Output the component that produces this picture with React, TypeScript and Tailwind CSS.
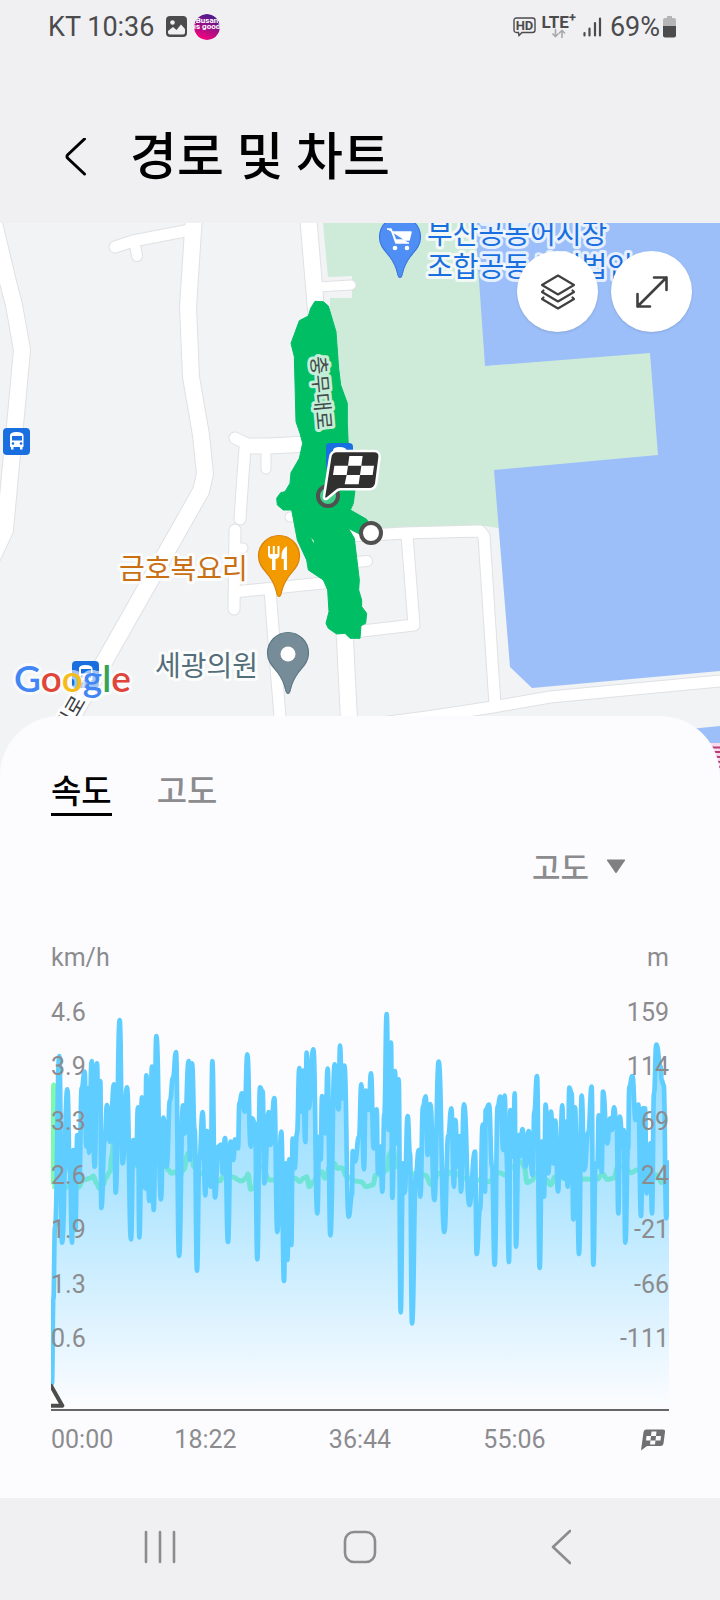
import { useState } from 'react'
import { clsx } from 'clsx'

// chart units: 1854 wide, 1233 high, y grows downwards
const SPEED: number[][] = [
  [3, 1150], [7, 900], [12, 680], [25, 168], [33, 728], [49, 268], [57, 520], [63, 728], [67, 450], [73, 690],
  [79, 405], [85, 540], [92, 265], [101, 215], [106, 440], [111, 265], [114, 458], [122, 183], [131, 500], [138, 190],
  [142, 330], [148, 243], [151, 624], [161, 420], [168, 315], [177, 425], [189, 253], [194, 578], [206, 60], [215, 490],
  [228, 262], [240, 718], [247, 420], [255, 490], [261, 322], [265, 712], [273, 292], [282, 565], [286, 226], [295, 603],
  [303, 200], [308, 630], [316, 108], [330, 598], [337, 353], [347, 500], [357, 300], [366, 232], [375, 156], [384, 768],
  [396, 316], [401, 400], [413, 183], [417, 480], [423, 190], [431, 388], [438, 812], [445, 480], [455, 336], [463, 586],
  [468, 393], [479, 560], [484, 183], [492, 592], [502, 440], [510, 434], [515, 520], [522, 414], [531, 726], [539, 425],
  [547, 480], [552, 418], [561, 445], [565, 310], [573, 280], [581, 335], [589, 163], [599, 440], [603, 355], [612, 370],
  [619, 778], [627, 262], [635, 275], [640, 550], [653, 336], [658, 435], [670, 294], [679, 696], [691, 395], [699, 843],
  [704, 490], [709, 780], [715, 478], [721, 735], [725, 416], [731, 505], [738, 400], [745, 204], [750, 335], [756, 212],
  [763, 426], [767, 158], [773, 325], [787, 148], [799, 640], [805, 410], [809, 480], [813, 288], [823, 400], [830, 206],
  [838, 706], [851, 193], [863, 328], [867, 137], [873, 295], [880, 197], [893, 650], [903, 585], [905, 453], [912, 485],
  [924, 410], [931, 253], [939, 508], [944, 272], [953, 330], [960, 220], [968, 445], [977, 328], [981, 520], [988, 440],
  [994, 575], [1000, 340], [1007, 42], [1013, 390], [1020, 128], [1024, 594], [1032, 213], [1037, 430], [1043, 238],
  [1049, 937], [1056, 490], [1061, 578], [1070, 348], [1077, 460], [1083, 970], [1095, 520], [1103, 450], [1108, 590],
  [1116, 318], [1124, 289], [1130, 465], [1138, 312], [1150, 600], [1163, 185], [1180, 696], [1192, 405], [1201, 325],
  [1209, 560], [1213, 360], [1220, 500], [1225, 408], [1230, 575], [1239, 313], [1255, 615], [1272, 455], [1277, 762],
  [1287, 630], [1295, 374], [1302, 575], [1304, 330], [1314, 314], [1323, 500], [1331, 794], [1340, 320], [1348, 290],
  [1357, 450], [1361, 287], [1366, 460], [1374, 786], [1378, 330], [1387, 470], [1391, 280], [1395, 740], [1403, 405],
  [1407, 470], [1414, 387], [1424, 500], [1433, 393], [1445, 525], [1450, 335], [1458, 228], [1466, 804], [1473, 425],
  [1479, 590], [1484, 314], [1492, 520], [1500, 335], [1507, 490], [1513, 362], [1521, 574], [1527, 465], [1534, 316],
  [1538, 535], [1544, 365], [1550, 560], [1555, 263], [1562, 280], [1567, 658], [1572, 322], [1577, 440], [1584, 762],
  [1592, 287], [1600, 510], [1612, 395], [1622, 260], [1627, 794], [1634, 490], [1639, 500], [1643, 346], [1652, 515],
  [1656, 275], [1669, 430], [1677, 355], [1683, 390], [1689, 322], [1697, 380], [1702, 640], [1707, 350], [1714, 440],
  [1718, 390], [1723, 728], [1731, 450], [1735, 260], [1744, 228], [1754, 360], [1762, 314], [1770, 648], [1776, 325],
  [1782, 325], [1787, 580], [1792, 480], [1798, 430], [1803, 640], [1809, 280], [1816, 134], [1829, 200], [1832, 240],
  [1838, 255], [1846, 655], [1851, 488],
]

const ALTITUDE: number[][] = [
  [4, 560], [8, 255], [14, 560], [40, 560], [82, 562], [97, 540], [117, 535], [127, 528], [137, 550], [145, 565],
  [157, 555], [165, 532], [177, 515], [182, 470], [189, 420], [222, 410], [229, 435], [239, 490], [252, 498],
  [317, 450], [345, 500], [352, 510], [362, 520], [372, 515], [385, 530], [397, 510], [412, 460], [422, 455],
  [428, 500], [447, 520], [507, 542], [517, 530], [542, 530], [572, 543], [585, 535], [591, 522], [599, 568],
  [609, 562], [622, 500], [632, 500], [657, 540], [732, 535], [747, 545], [757, 535], [767, 530], [775, 560],
  [787, 545], [802, 520], [812, 515], [822, 535], [837, 500], [849, 490], [859, 505], [872, 503], [887, 530],
  [912, 543], [929, 545], [947, 560], [965, 555], [975, 525], [992, 522], [1007, 510], [1017, 460], [1025, 445],
  [1037, 500], [1077, 520], [1122, 525], [1142, 555], [1165, 520], [1187, 525], [1202, 515], [1242, 535],
  [1277, 540], [1317, 545], [1332, 520], [1347, 518], [1362, 525], [1387, 500], [1412, 485], [1419, 500],
  [1429, 548], [1442, 542], [1455, 520], [1487, 540], [1499, 555], [1512, 530], [1567, 540], [1597, 537],
  [1637, 538], [1655, 522], [1669, 538], [1687, 535], [1702, 500], [1717, 498], [1742, 518], [1757, 510],
  [1787, 520], [1817, 525], [1832, 548], [1851, 520],
]

const SPEED_TICKS = ['4.6', '3.9', '3.3', '2.6', '1.9', '1.3', '0.6']
const ALTITUDE_TICKS = ['159', '114', '69', '24', '-21', '-66', '-111']

const ROADS: { d: string; w: number }[] = [
  { d: 'M-6 223 L8 282 L14 305 L22 350 L16 415 L10 475 L5 530 L-16 575', w: 16 },
  { d: 'M194 215 L188 307 L191 377 L201 435 L205 474 L201 491 L104 662 L60 738', w: 16 },
  { d: 'M115 247 L133 241 L190 230', w: 11 },
  { d: 'M135 245 L137 256', w: 10 },
  { d: 'M308 215 L316 310 L325 420 L335 520 L345 640 L350 740', w: 16 },
  { d: 'M318 287 L351 285', w: 9 },
  { d: 'M235 438 L247 444 L268 446', w: 11 },
  { d: 'M252 446 L270 446 L308 444', w: 15 },
  { d: 'M245 448 L243 475 L240 519', w: 11 },
  { d: 'M266 453 L266 469', w: 9 },
  { d: 'M235 530 L234 609', w: 11 },
  { d: 'M236 548 L243 548', w: 9 },
  { d: 'M234 592 L323 583', w: 11 },
  { d: 'M270 590 L281 730', w: 11 },
  { d: 'M290 517 L310 515', w: 9 },
  { d: 'M340 536 L371 535 L405 533 L480 531 L484 536 L495 705', w: 11 },
  { d: 'M407 535 L414 625 L345 633', w: 11 },
  { d: 'M345 563 L367 561', w: 10 },
  { d: 'M350 727 L427 717 L493 707 L550 697 L730 680', w: 11 },
]

// each segment leaves and enters its points horizontally
function toCurve(points: number[][]) {
  let d = `M${points[0][0]} ${points[0][1]}`
  for (let i = 1; i < points.length; i++) {
    const [x0, y0] = points[i - 1]
    const [x1, y1] = points[i]
    const mid = (x0 + x1) / 2
    d += ` C${mid} ${y0} ${mid} ${y1} ${x1} ${y1}`
  }
  return d
}

function StatusBar() {
  return (
    <div className="flex h-[52px] items-center justify-between pt-px pr-11 pl-12 text-[27px] leading-8 text-[#4b4b4d]">
      <div className="flex items-center">
        <span>KT 10:36</span>
        <svg viewBox="0 0 21 21" className="ml-3 h-[21px] w-[21px]">
          <rect width="21" height="21" rx="4" fill="#4b4b4d" />
          <circle cx="6.5" cy="6.5" r="2.3" fill="#f0f0f3" />
          <path d="M2 15 L7 11 L10.5 14 L15 8.500 L19 13 V16.500 Q19 18.500 17 18.500 H4 Q2 18.500 2 16.500 Z" fill="#f0f0f3" />
        </svg>
        <svg viewBox="0 0 26 26" className="ml-[7px] h-[26px] w-[26px]">
          <defs>
            <linearGradient id="busan" x1="0.2" y1="1" x2="0.6" y2="0">
              <stop offset="0.1" stopColor="#f0047f" />
              <stop offset="0.9" stopColor="#571a8b" />
            </linearGradient>
            <clipPath id="badge"><circle cx="13" cy="13" r="13" /></clipPath>
          </defs>
          <g clipPath="url(#badge)">
            <circle cx="13" cy="13" r="13" fill="url(#busan)" />
            <g fill="#fff" fontSize="8" fontWeight="700" textAnchor="middle">
              <text x="13" y="9">Busan</text>
              <text x="13" y="15">is good</text>
            </g>
          </g>
        </svg>
      </div>
      <div className="flex items-center">
        <svg viewBox="0 0 23 20" className="h-5 w-[23px]">
          <path d="M3.500 1 H19.500 Q22 1 22 3.500 V13 Q22 15.500 19.500 15.500 H9 L6 18.500 L5.500 15.500 H3.500 Q1 15.500 1 13 V3.500 Q1 1 3.500 1 Z" fill="none" stroke="#4b4b4d" strokeWidth="1.4" />
          <text x="11.500" y="13" fontSize="13" fontWeight="700" textAnchor="middle" fill="#4b4b4d">HD</text>
        </svg>
        <div className="ml-[6px] flex flex-col items-center">
          <span className="text-[17px] leading-[14px] font-bold">LTE<sup>+</sup></span>
          <svg viewBox="0 0 14 9" className="h-[9px] w-[14px]" fill="none" stroke="#a9a9ab" strokeWidth="1.6">
            <path d="M3.500 0 V7.500 M0.500 4.500 L3.500 7.700 L6.500 4.500" />
            <path d="M10 9 V1.500 M7 4.500 L10 1.300 L13 4.500" />
          </svg>
        </div>
        <svg viewBox="0 0 19 20" className="ml-[7px] h-5 w-[19px]" stroke="#4b4b4d" strokeWidth="2.2" strokeLinecap="round">
          <path d="M1.500 16 V18.500 M6.500 11.500 V18.500 M12 6 V18.500 M17 1.500 V18.500" />
        </svg>
        <span className="ml-2">69%</span>
        <svg viewBox="0 0 13 22" className="ml-[3px] h-[22px] w-[13px]">
          <path d="M4 0 H9 V2 H11 Q13 2 13 4 V11 H0 V4 Q0 2 2 2 H4 Z" fill="#b5b5b8" />
          <path d="M0 10 H13 V19.500 Q13 21.500 11 21.500 H2 Q0 21.500 0 19.500 Z" fill="#4b4b4d" />
        </svg>
      </div>
    </div>
  )
}

function BusStop({ x, y }: { x: number; y: number }) {
  return (
    <g transform={`translate(${x} ${y})`}>
      <rect width="27" height="27" rx="4" fill="#1a6fe0" />
      <path d="M7 7.500 Q7 4 13.500 4 Q20.500 4 20.500 7.500 V19 H19.500 V21.500 H17 V19 H10.500 V21.500 H8 V19 H7 Z" fill="#fff" />
      <rect x="9" y="8" width="10" height="4.500" fill="#1a6fe0" />
      <circle cx="10" cy="15.500" r="1.300" fill="#1a6fe0" />
      <circle cx="18" cy="15.500" r="1.300" fill="#1a6fe0" />
    </g>
  )
}

function Pin({ x, y, fill, stroke, children }: { x: number; y: number; fill: string; stroke: string; children: React.ReactNode }) {
  return (
    <g transform={`translate(${x} ${y})`}>
      <path
        d="M0 -20.500 A20.500 20.500 0 0 1 20.500 0 C20.500 9 15 13.500 10 20 C6 25.500 4 30 2.500 36 Q1.800 40.500 0 40.500 Q-1.800 40.500 -2.500 36 C-4 30 -6 25.500 -10 20 C-15 13.500 -20.500 9 -20.500 0 A20.500 20.500 0 0 1 0 -20.500 Z"
        fill={fill}
        stroke={stroke}
        strokeWidth="1.200"
      />
      {children}
    </g>
  )
}

function RouteMap() {
  return (
    <svg viewBox="0 223 720 560" preserveAspectRatio="xMidYMid slice" className="block h-[560px] w-full bg-[#f1f3f5]" role="img">
      <path d="M323 223 H480 L490 366 L655 345 L662 460 L498 470 L502 528 L498 528 L486 526 L400 531 L350 534 L330 400 L330 298 H352 V276 L328 277 Z" fill="#ceead8" />
      <path d="M475 223 H720 V671 L532 688 L510 667 L494 470 L658 455 L650 353 L485 366 Z" fill="#9cbff9" />
      <path d="M690 729 L720 726 V744 H690 Z" fill="#9cbff9" />
      <rect x="690" y="743" width="30" height="40" fill="#f9dcec" />
      <path d="M700 747.500 H720 M700 752 H720 M708 756.500 L720 757 M710 761 L720 762 M714 767 H720" stroke="#b93d77" strokeWidth="2" />

      <g fill="none" strokeLinecap="round" strokeLinejoin="round">
        {ROADS.map(r => <path key={r.d} d={r.d} stroke="#dfe1e4" strokeWidth={r.w + 2} />)}
        {ROADS.map(r => <path key={r.d} d={r.d} stroke="#fff" strokeWidth={r.w} />)}
      </g>

      <BusStop x={3} y={428} />

      {/* walked route */}
      <g transform="translate(260 290) scale(0.33333)">
        <path
          d="M165 34 L190 35 L205 48 L228 125 L236 235 L242 285 L262 340 L262 400 L265 470 L275 560 L285 600 L280 640 L271 660 L320 688 L340 725 L300 733 L265 715 L283 745 L298 870 L296 900 L305 930 L305 950 L320 970 L317 1000 L303 1007 L300 1045 L270 1045 L255 1030 L230 1032 L205 1015 L198 1000 L207 965 L203 900 L190 870 L145 840 L140 810 L112 750 L95 660 L70 660 L52 645 L50 625 L62 608 L75 605 L90 580 L93 548 L118 505 L128 460 L120 430 L108 395 L103 200 L93 160 L118 92 L145 78 L152 55 Z"
          fill="#00be64"
          stroke="#00be64"
          strokeWidth="3"
          strokeLinejoin="round"
        />
        <path d="M153 743 L162 752 L161 760 Z" fill="#ceead8" />
      </g>
      <BusStop x={326} y={443} />

      <g transform="rotate(85 320 392)">
        <text x="321" y="398" fontSize="20" textAnchor="middle" fill="#414b49" stroke="#c5eed8" strokeWidth="6" strokeLinejoin="round" paintOrder="stroke">충무대로</text>
      </g>

      <g stroke="#505050" strokeWidth="4">
        <circle cx="328" cy="496" r="10" fill="#3fd08a" />
        <circle cx="371" cy="533" r="10" fill="#fff" />
      </g>
      <g transform="translate(260 290) scale(0.33333)">
        <path
          d="M232 487 H342 Q357 487 355 502 L345 580 Q342 594 328 594 H240 Q232 594 222 604 L200 622 Q194 626 196 618 L214 503 Q216 487 232 487 Z"
          fill="#303030" stroke="#fff" strokeWidth="15" paintOrder="stroke" strokeLinejoin="round"
        />
        <path d="M268 498 H308 L304 527 H264 Z M223 527 H264 L260 555 H219 Z M304 527 H342 L338 555 H300 Z M260 555 H300 L296 583 H254 Z" fill="#fff" />
      </g>

      <Pin x={400} y={237} fill="#4f8ff5" stroke="#3a78dd">
        <path d="M-13 -8 H-9 L-4 6 H9 M-7.500 -5 H11 L9 3 H-4.500 Z" fill="#fff" stroke="#fff" strokeWidth="1.600" strokeLinejoin="round" />
        <circle cx="-5" cy="11" r="2.300" fill="#fff" />
        <circle cx="7" cy="11" r="2.300" fill="#fff" />
      </Pin>
      <Pin x={279} y={556} fill="#f39a00" stroke="#d8820c">
        <path d="M-11 -10 V-1 Q-11 2 -7 3 V14 H-3.500 V3 Q0.500 2 0.500 -1 V-10 H-1.500 V-2 H-4.200 V-10 H-6.200 V-2 H-9 V-10 Z" fill="#fff" />
        <path d="M8 -10 Q2.500 -7 2.500 0 V3 H4.800 V14 H8 Z" fill="#fff" />
      </Pin>
      <Pin x={288} y={653} fill="#768d99" stroke="#5e7784">
        <circle cy="1" r="7.500" fill="#fff" />
      </Pin>

      <g fontSize="28" stroke="#fff" strokeOpacity="0.75" strokeWidth="6" strokeLinejoin="round" paintOrder="stroke">
        <text x="427" y="244" fill="#1a6fe0">부산공동어시장</text>
        <text x="427" y="277" fill="#1a6fe0">조합공동사업법인</text>
        <text x="119" y="579" fill="#c96f14">금호복요리</text>
        <text x="155" y="676" fill="#546e7a">세광의원</text>
      </g>

      <BusStop x={72} y={661} />
      <g transform="rotate(-60 75 705)">
        <text x="84" y="713" fontSize="21" textAnchor="end" fill="#3c4043" stroke="#fff" strokeWidth="5" paintOrder="stroke">대로</text>
      </g>
      <text x="14" y="692" fontSize="37" fontWeight="600" fontFamily="Lato" stroke="#fff" strokeOpacity="0.6" strokeWidth="6" strokeLinejoin="round" paintOrder="stroke">
        <tspan fill="#4285f4">G</tspan>
        <tspan fill="#e0453a">o</tspan>
        <tspan fill="#f5bd18">o</tspan>
        <tspan fill="#4285f4">g</tspan>
        <tspan fill="#34a353">l</tspan>
        <tspan fill="#e0453a">e</tspan>
      </text>
    </svg>
  )
}

function SpeedChart() {
  return (
    <div className="relative mt-[26px]">
      <svg viewBox="0 0 1854 1233" preserveAspectRatio="none" className="block h-[411px] w-full">
        <defs>
          <linearGradient id="fill" gradientUnits="userSpaceOnUse" x1="0" y1="42" x2="0" y2="1220">
            <stop offset="0" stopColor="#5fcdff" stopOpacity="0.72" />
            <stop offset="0.45" stopColor="#5fcdff" stopOpacity="0.48" />
            <stop offset="1" stopColor="#5fcdff" stopOpacity="0" />
          </linearGradient>
        </defs>
        <path d={toCurve(ALTITUDE)} fill="none" stroke="#7dfaae" strokeWidth="15" strokeLinejoin="round" />
        <path d={toCurve(SPEED) + ' L1854 488 V1227 H0 V1150 Z'} fill="url(#fill)" />
        <path d={toCurve(SPEED)} fill="none" stroke="#5fcdff" strokeWidth="14" strokeLinejoin="round" strokeLinecap="round" />
        <path d="M-30 1217 L0 1157 L34 1217 Z" fill="#fff" stroke="#4d4d4d" strokeWidth="12" strokeLinejoin="round" />
        <path d="M0 1230 H1854" stroke="#666" strokeWidth="6" />
      </svg>
      <div className="absolute inset-x-0 -top-[14px] flex h-[380px] justify-between leading-[54px]">
        <div className="flex flex-col justify-between">
          {SPEED_TICKS.map(t => <span key={t}>{t}</span>)}
        </div>
        <div className="flex flex-col justify-between text-right">
          {ALTITUDE_TICKS.map(t => <span key={t}>{t}</span>)}
        </div>
      </div>
    </div>
  )
}

export default function App() {
  const [tab, setTab] = useState('속도')

  return (
    <div className="flex min-h-screen flex-col bg-[#f0f0f3] font-[Roboto,'Noto_Sans_CJK_KR',sans-serif]">
      <StatusBar />

      <header className="flex items-center pt-[78px] pb-[37px] pl-16">
        <button aria-label="뒤로" className="p-0">
          <svg viewBox="0 0 24 40" className="h-10 w-6" fill="none" stroke="#000" strokeWidth="3" strokeLinecap="round" strokeLinejoin="round">
            <path d="M20.500 1 L3.500 17 Q2.500 18.500 3.500 20 L20.500 36" />
          </svg>
        </button>
        <h1 className="ml-[42px] text-[51px] leading-[56px] font-medium text-black">경로 및 차트</h1>
      </header>

      <div className="relative">
        <RouteMap />
        <div className="absolute top-7 right-7 flex gap-[13px]">
          <button aria-label="지도 유형" className="grid h-[81px] w-[81px] place-items-center rounded-full bg-white shadow-sm">
            <svg viewBox="0 0 36 36" className="h-9 w-9" fill="none" stroke="#404040" strokeWidth="2.200" strokeLinejoin="round" strokeLinecap="round">
              <path d="M18 1.500 L34 11 L18 20.500 L2 11 Z" />
              <path d="M3.500 16.500 L2 18 L18 27.500 L34 18 L32.500 16.500" />
              <path d="M3.500 23.500 L2 25 L18 34.500 L34 25 L32.500 23.500" />
            </svg>
          </button>
          <button aria-label="전체 화면" className="grid h-[81px] w-[81px] place-items-center rounded-full bg-white shadow-sm">
            <svg viewBox="0 0 32 32" className="h-8 w-8" fill="none" stroke="#404040" strokeWidth="2.600" strokeLinejoin="round" strokeLinecap="round">
              <path d="M18 1.500 H30.500 V14 M30.500 1.500 L1.500 30.500 M1.500 18 V30.500 H14" />
            </svg>
          </button>
        </div>
      </div>

      <main className="relative -mt-[67px] flex-1 rounded-t-[60px] bg-[#fcfcff] px-[51px] pt-14 text-[25px] leading-8 text-[#8c8c8f]">
        <div role="tablist" className="flex gap-[45px]">
          {['속도', '고도'].map(t => (
            <button
              key={t}
              role="tab"
              aria-selected={tab === t}
              onClick={() => setTab(t)}
              className={clsx(
                'border-b-[3px] pb-px text-[33px] leading-10 font-medium',
                tab === t ? 'border-black text-black' : 'border-transparent text-[#8c8c8f]'
              )}
            >
              {t}
            </button>
          ))}
        </div>

        <div className="mt-[33px] mr-[43px] flex justify-end">
          <div className="relative">
            <select aria-label="비교 항목" className="appearance-none bg-transparent pr-9 text-[31px] leading-10 font-medium">
              <option>고도</option>
            </select>
            <svg viewBox="0 0 20 15" className="pointer-events-none absolute top-[10px] right-0 h-[15px] w-5">
              <path d="M1.500 0.500 H18.500 Q19.500 0.500 19 1.500 L10.800 13.500 Q10 14.500 9.200 13.500 L1 1.500 Q0.500 0.500 1.500 0.500 Z" fill="#808083" />
            </svg>
          </div>
        </div>

        <div className="mt-[53px] flex justify-between">
          <span>km/h</span>
          <span>m</span>
        </div>

        <SpeedChart />

        <div className="mt-[13px] flex items-center pb-[42px]">
          <span className="w-1/8">00:00</span>
          <span className="w-1/4 text-center">18:22</span>
          <span className="w-1/4 text-center">36:44</span>
          <span className="w-1/4 text-center">55:06</span>
          <span className="flex w-1/8 justify-end pr-[3px]">
            <svg viewBox="0 0 26 22" className="h-[22px] w-[26px]">
              <path d="M6 0.500 H23 Q25.500 0.500 25 3 L23.500 14.500 Q23 17 20.500 17 H7 L1 21.500 L3.500 3 Q4 0.500 6 0.500 Z" fill="#707073" />
              <path d="M11.500 2.500 H16.500 L16 7 H11 Z M6.500 7 H11 L10.500 11.500 H6 Z M16 7 H21 L20.500 11.500 H15.500 Z M10.500 11.500 H15.500 L15 15.500 H10 Z" fill="#fcfcff" />
            </svg>
          </span>
        </div>
      </main>

      <nav className="grid h-[102px] grid-cols-3 px-[60px] pb-1 text-[#8c8c8f]">
        <button aria-label="최근 앱" className="grid place-items-center">
          <svg viewBox="0 0 32 34" className="h-[34px] w-8" fill="none" stroke="currentColor" strokeWidth="2.600" strokeLinecap="round">
            <path d="M2 2 V32 M16 2 V32 M30 2 V32" />
          </svg>
        </button>
        <button aria-label="홈" className="grid place-items-center">
          <svg viewBox="0 0 34 34" className="h-[34px] w-[34px]" fill="none" stroke="currentColor" strokeWidth="2.600">
            <rect x="2" y="2" width="30" height="30" rx="9" />
          </svg>
        </button>
        <button aria-label="이전" className="grid place-items-center">
          <svg viewBox="0 0 22 36" className="h-9 w-[22px]" fill="none" stroke="currentColor" strokeWidth="2.600" strokeLinecap="round" strokeLinejoin="round">
            <path d="M21 2 L4 18 L21 34" />
          </svg>
        </button>
      </nav>
    </div>
  )
}
